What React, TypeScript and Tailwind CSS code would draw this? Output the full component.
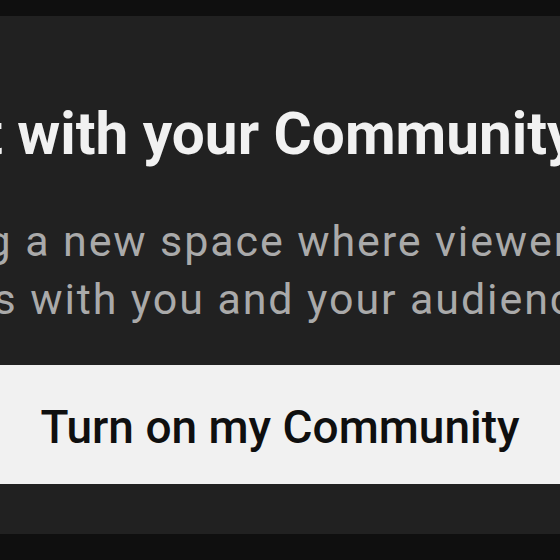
export default function App() {
  return (
    <div
      className="w-[560px] h-[560px] overflow-hidden bg-[#0f0f0f] pt-4"
      style={{ fontFamily: 'Roboto, "Noto Sans", sans-serif' }}
    >
      <div className="bg-[#212121] pt-[83px] pb-[50px] overflow-hidden">
        {/* Heading, cropped on both sides */}
        <h2 className="whitespace-nowrap ml-[-216px] text-[58.5px] leading-[70px] font-bold text-[#f1f1f1]">
          Connect with your Community
        </h2>

        <div className="mt-[43px] text-[43px] leading-[58px] tracking-[1.9px] text-[#aaaaaa] whitespace-nowrap">
          <p className="ml-[-154px]">building a new space where viewers can</p>
          <p className="ml-[-99px]">posts with you and your audience.</p>
        </div>

        <button className="mt-[37px] w-full h-[119px] bg-[#f1f1f1] text-[#0f0f0f] text-[46px] font-medium flex items-center justify-center pt-[6px]">
          Turn on my Community
        </button>
      </div>
    </div>
  );
}
